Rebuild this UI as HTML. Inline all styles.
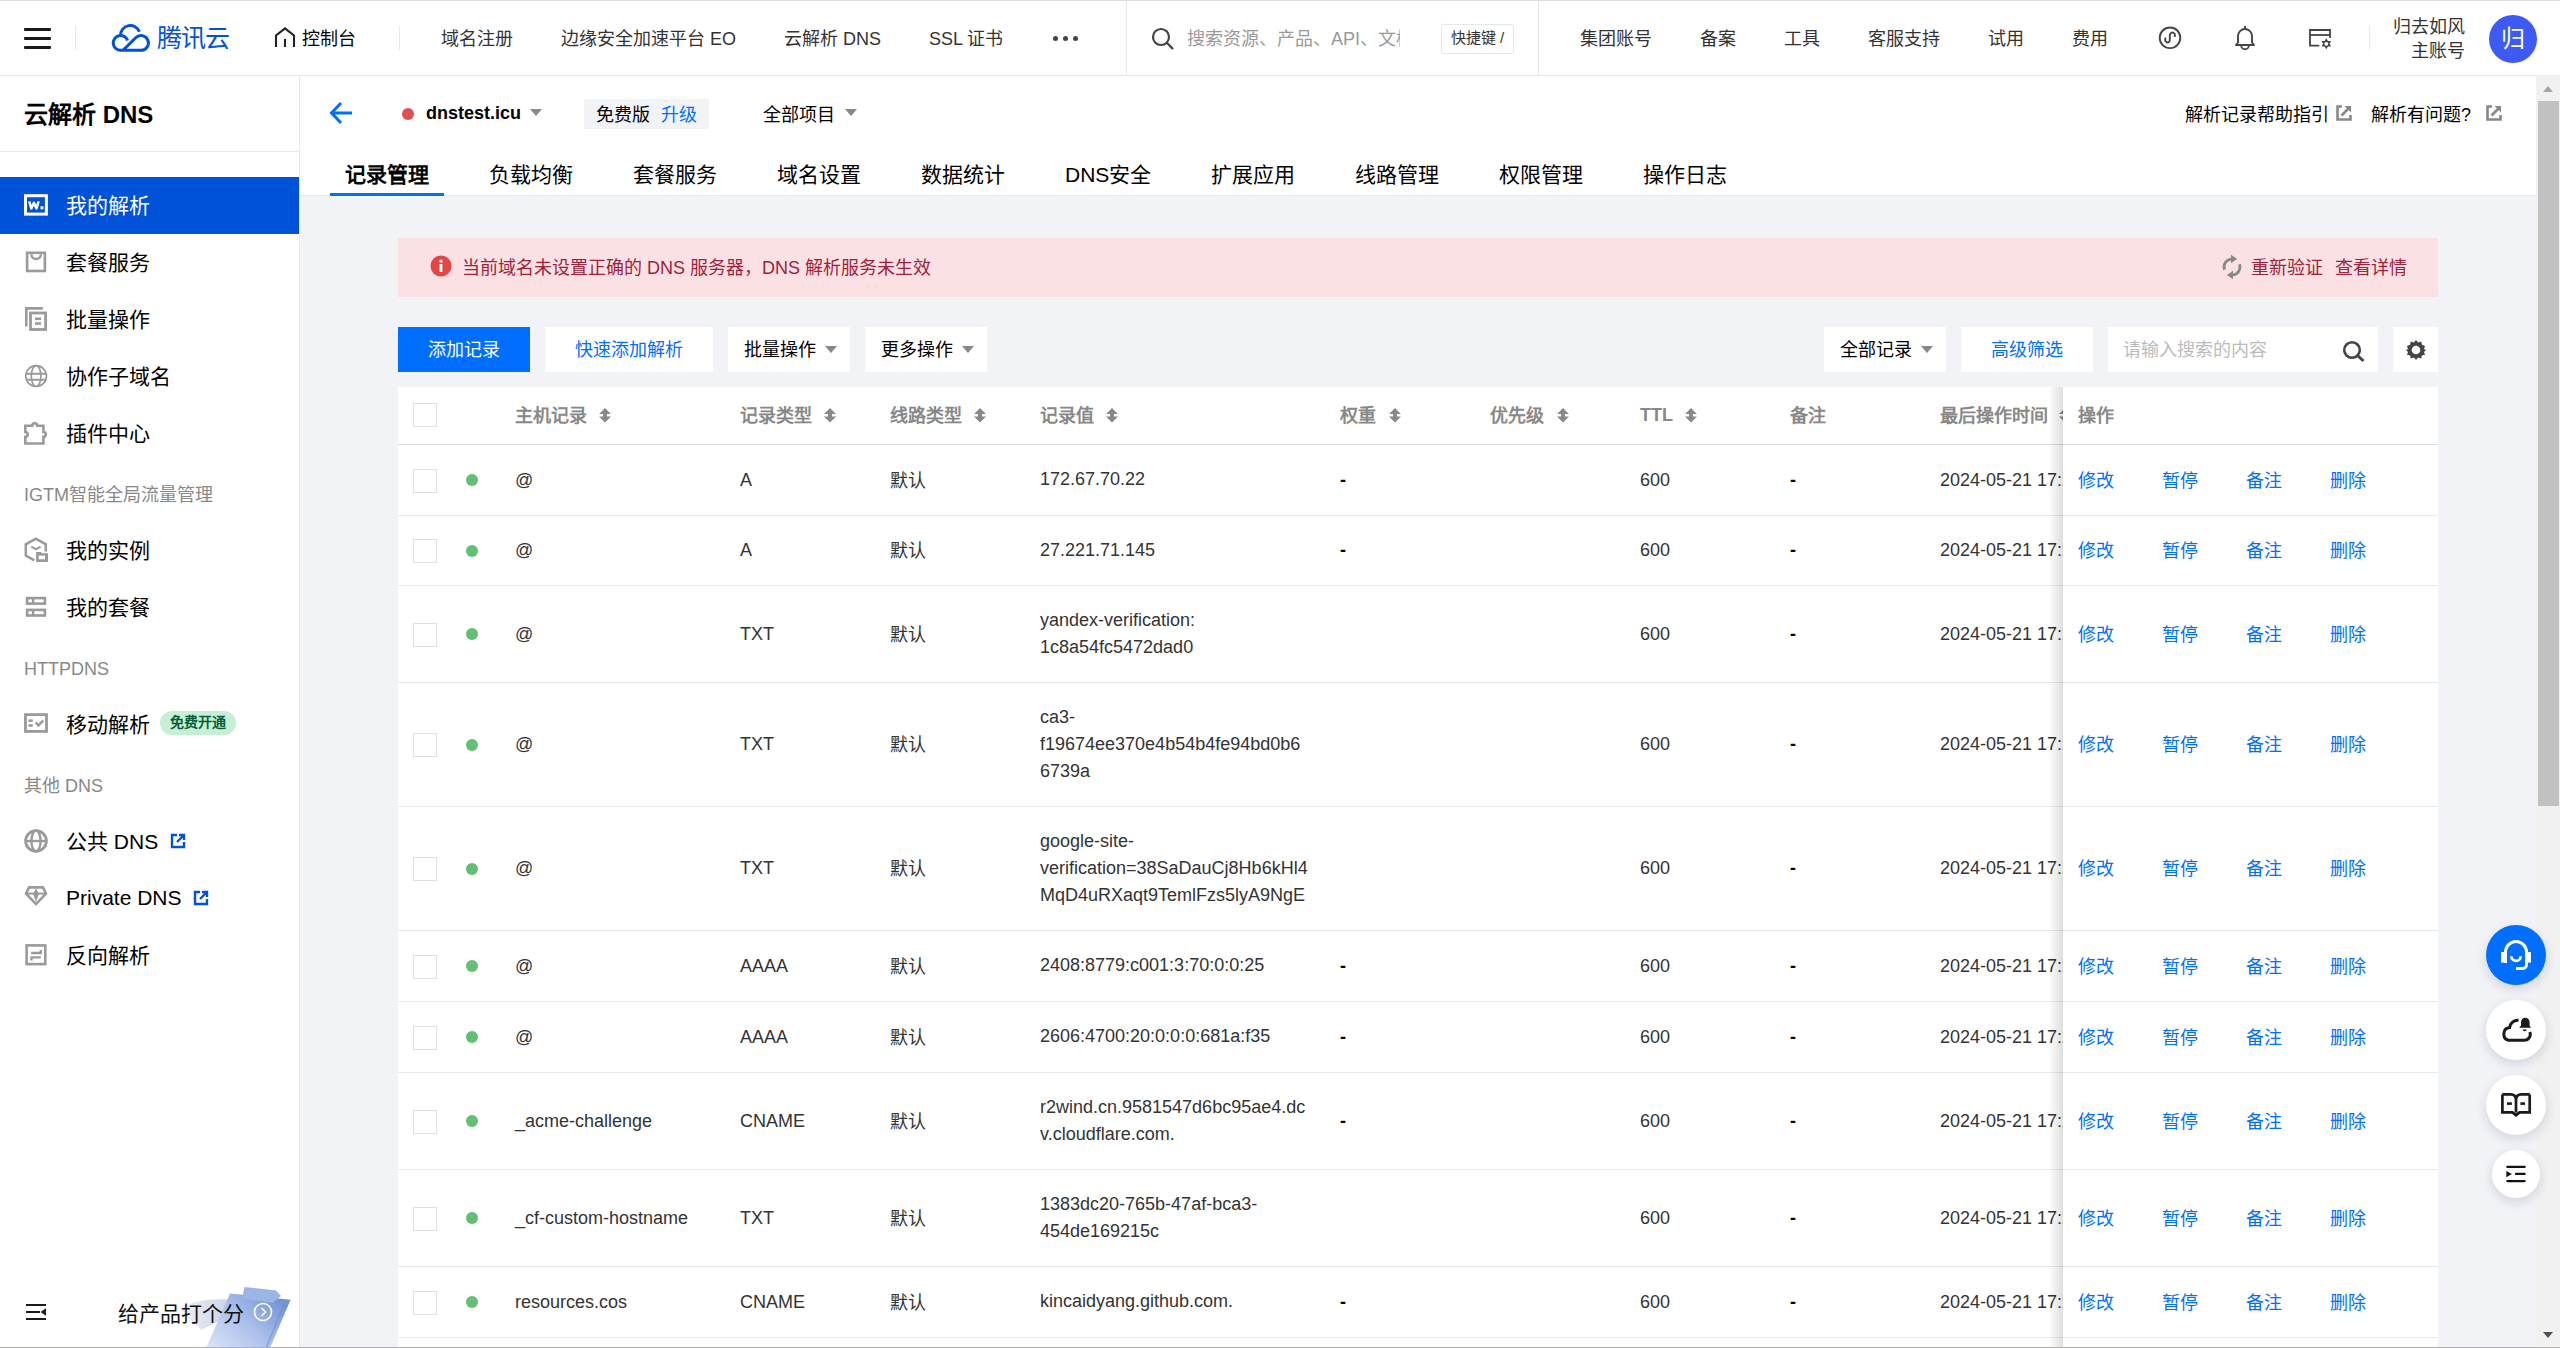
<!DOCTYPE html>
<html lang="zh-CN"><head><meta charset="utf-8">
<style>
*{box-sizing:border-box;margin:0;padding:0}
html,body{width:2560px;height:1348px;overflow:hidden;background:#fff;font-family:"Liberation Sans",sans-serif;color:#000}
.a{position:absolute;white-space:nowrap}
#top{z-index:10;position:absolute;left:0;top:0;width:2560px;height:76px;background:#fff;border-bottom:1px solid #e6e8ee}
#topline{position:absolute;left:0;top:0;width:2560px;height:1px;background:#dcdedd}
.nav{font-size:18px;color:#333;line-height:20px;top:29px}
.vd{position:absolute;width:1px;background:#e5e8ee}
#side{position:absolute;left:0;top:0;width:300px;height:1348px;background:#fff;border-right:1px solid #e5e8ee}
.si{position:absolute;left:0;width:299px;height:57px}
.si .ic{position:absolute;left:24px;top:16px;width:24px;height:24px}
.si .tx{position:absolute;left:66px;top:17px;font-size:21px;line-height:24px;color:#000;white-space:nowrap}
.grp{position:absolute;left:24px;font-size:18px;color:#888;line-height:20px;white-space:nowrap}
#main{position:absolute;left:0;top:0;width:2560px;height:1348px}
body{background:#f2f3f7}
#hdr{position:absolute;left:0;top:0;width:2236px;height:120px;background:#fff;border-bottom:1px solid #e5e8ee}
.tab{position:absolute;top:86px;font-size:21px;line-height:24px;color:#000;white-space:nowrap}
</style></head><body>
<div id="top">
  <div id="topline"></div>
  <div class="a" style="left:24px;top:28px;width:27px;height:3px;background:#1a1a1a;border-radius:1px"></div>
  <div class="a" style="left:24px;top:37px;width:27px;height:3px;background:#1a1a1a;border-radius:1px"></div>
  <div class="a" style="left:24px;top:46px;width:27px;height:3px;background:#1a1a1a;border-radius:1px"></div>
  <div class="vd" style="left:75px;top:26px;height:24px"></div>
  <svg class="a" style="left:100px;top:10px" width="60" height="50" viewBox="100 10 60 50">
    <path d="M120.6 35.5 A9.7 9.7 0 0 1 139.4 31.8" fill="none" stroke="#0052d9" stroke-width="3"/>
    <path d="M127.6 40.4 A7.4 7.4 0 1 0 120.6 50.3 L140.9 50.3 A7.4 7.4 0 1 0 135.7 37.7 L123 50.3" fill="none" stroke="#0052d9" stroke-width="3" stroke-linejoin="round"/>
  </svg>
  <div class="a" style="left:157px;top:23px;font-size:25px;line-height:30px;color:#0052d9;letter-spacing:-1px">腾讯云</div>
  <svg class="a" style="left:274px;top:26px" width="22" height="22" viewBox="0 0 22 22">
    <path d="M2 21 V9.5 L11 2.4 L20 9.5 V21 M11 13 V21" fill="none" stroke="#222" stroke-width="2.1"/>
  </svg>
  <div class="a nav" style="left:302px;color:#000">控制台</div>
  <div class="vd" style="left:399px;top:26px;height:24px"></div>
  <div class="a nav" style="left:441px">域名注册</div>
  <div class="a nav" style="left:561px">边缘安全加速平台 EO</div>
  <div class="a nav" style="left:784px">云解析 DNS</div>
  <div class="a nav" style="left:929px">SSL 证书</div>
  <div class="a" style="left:1053px;top:36px;width:5px;height:5px;border-radius:50%;background:#444"></div>
  <div class="a" style="left:1063px;top:36px;width:5px;height:5px;border-radius:50%;background:#444"></div>
  <div class="a" style="left:1073px;top:36px;width:5px;height:5px;border-radius:50%;background:#444"></div>
  <div class="vd" style="left:1126px;top:0;height:75px"></div>
  <svg class="a" style="left:1151px;top:27px" width="24" height="23" viewBox="0 0 24 23">
    <circle cx="10" cy="10" r="8" fill="none" stroke="#444" stroke-width="2.2"/>
    <path d="M16 16 L22 22" stroke="#444" stroke-width="2.4"/>
  </svg>
  <div class="a nav" style="left:1187px;color:#999;width:213px;overflow:hidden">搜索资源、产品、API、文档</div>
  <div class="a" style="left:1441px;top:24px;width:73px;height:30px;border:1px solid #e3e6eb;border-radius:3px;font-size:15px;line-height:25px;color:#333;text-align:center">快捷键 /</div>
  <div class="vd" style="left:1538px;top:0;height:75px"></div>
  <div class="a nav" style="left:1580px">集团账号</div>
  <div class="a nav" style="left:1700px">备案</div>
  <div class="a nav" style="left:1784px">工具</div>
  <div class="a nav" style="left:1868px">客服支持</div>
  <div class="a nav" style="left:1988px">试用</div>
  <div class="a nav" style="left:2072px">费用</div>
  <svg class="a" style="left:2150px;top:20px" width="40" height="36" viewBox="2150 20 40 36">
    <circle cx="2170" cy="37.8" r="10.3" fill="none" stroke="#444" stroke-width="1.9"/>
    <path d="M2165.6 37.6 C2163.8 42.5 2169.8 44.8 2169.8 39.5 V35.8 C2169.8 30.8 2176.6 31.8 2174.6 37" fill="none" stroke="#444" stroke-width="1.9"/>
  </svg>
  <svg class="a" style="left:2230px;top:20px" width="30" height="36" viewBox="2230 20 30 36">
    <path d="M2236 45 L2238 42.5 V36 a7 7 0 0 1 14 0 V42.5 L2254 45 Z" fill="none" stroke="#444" stroke-width="1.9" stroke-linejoin="round"/>
    <path d="M2245 26 V29" stroke="#444" stroke-width="1.9"/>
    <path d="M2241.2 45.5 a3.8 3.8 0 0 0 7.6 0" fill="none" stroke="#444" stroke-width="1.9"/>
  </svg>
  <svg class="a" style="left:2300px;top:20px" width="40" height="36" viewBox="2300 20 40 36">
    <path d="M2319.3 45.6 H2310 V30 H2330 V38" fill="none" stroke="#444" stroke-width="1.8"/>
    <path d="M2310 35 H2330" stroke="#444" stroke-width="1.8"/>
    <path d="M2326.3 38.3 L2331.1 46.6 H2321.5 Z M2326.3 49.3 L2321.5 41 H2331.1 Z" fill="#444"/>
    <circle cx="2326.3" cy="43.8" r="1.9" fill="#fff"/>
  </svg>
  <div class="vd" style="left:2369px;top:26px;height:24px"></div>
  <div class="a" style="right:95px;top:15px;font-size:18px;line-height:24px;color:#333;text-align:right">归去如风<br>主账号</div>
  <div class="a" style="left:2489px;top:15px;width:48px;height:48px;border-radius:50%;background:#3d5af5;color:#fff;font-size:24px;line-height:48px;text-align:center">归</div>
</div>
<div id="side">
  <div class="a" style="left:24px;top:100px;font-size:24px;line-height:30px;font-weight:bold;color:#000">云解析 DNS</div>
  <div class="a" style="left:0;top:151px;width:299px;height:1px;background:#e5e8ee"></div>
  <div class="a" style="left:0;top:177px;width:299px;height:57px;background:#0052d9"></div>
  <svg class="a" style="left:20px;top:190px" width="32" height="30" viewBox="20 190 32 30"><rect x="25.5" y="195.7" width="20.9" height="18.4" fill="none" stroke="#fff" stroke-width="3"/><path d="M29.2 201.4 L31.3 208.4 L33.9 202.8 L36.5 208.4 L38.6 201.4" fill="none" stroke="#fff" stroke-width="2.5" stroke-linejoin="round"/><rect x="40.5" y="206.3" width="3" height="3" fill="#fff"/></svg>
  <div class="a" style="left:66px;top:193px;font-size:21px;line-height:26px;color:#fff">我的解析</div>
  <svg class="a" style="left:20px;top:246px" width="32" height="32" viewBox="20 246 32 32"><rect x="27.1" y="252.8" width="17.8" height="18.2" fill="none" stroke="#9a9a9a" stroke-width="2.6"/><path d="M31.4 254.3 A4.75 4.75 0 0 0 40.9 254.3" fill="none" stroke="#9a9a9a" stroke-width="2.4"/></svg>
  <div class="a" style="left:66px;top:250px;font-size:21px;line-height:26px;color:#000">套餐服务</div>
  <svg class="a" style="left:20px;top:303px" width="32" height="32" viewBox="20 303 32 32"><path d="M26.3 326.4 V308.4 H42.8" fill="none" stroke="#9a9a9a" stroke-width="2.6"/><rect x="30.5" y="313" width="15.1" height="16.5" fill="none" stroke="#9a9a9a" stroke-width="2.8"/><rect x="35" y="317.5" width="6.1" height="2.6" fill="#9a9a9a"/><rect x="35" y="322.2" width="6.1" height="2.6" fill="#9a9a9a"/></svg>
  <div class="a" style="left:66px;top:307px;font-size:21px;line-height:26px;color:#000">批量操作</div>
  <svg class="a" style="left:20px;top:360px" width="32" height="32" viewBox="20 360 32 32"><circle cx="36.1" cy="376.1" r="10.4" fill="none" stroke="#9a9a9a" stroke-width="1.7"/><ellipse cx="36.1" cy="376.1" rx="4.85" ry="10.4" fill="none" stroke="#9a9a9a" stroke-width="1.7"/><path d="M26 373.8 H46.2 M26 379.7 H46.2" stroke="#9a9a9a" stroke-width="2"/></svg>
  <div class="a" style="left:66px;top:364px;font-size:21px;line-height:26px;color:#000">协作子域名</div>
  <svg class="a" style="left:20px;top:417px" width="32" height="32" viewBox="20 417 32 32"><path d="M25.3 425.7 H32.2 A2.5 2.5 0 0 1 37.2 425.7 H43.4 V432 A2.4 2.4 0 0 1 43.4 436.8 V443.5 H25.3 V436.8 A2.4 2.4 0 0 0 25.3 432 Z" fill="none" stroke="#9a9a9a" stroke-width="2.6"/></svg>
  <div class="a" style="left:66px;top:421px;font-size:21px;line-height:26px;color:#000">插件中心</div>
  <svg class="a" style="left:20px;top:534px" width="32" height="32" viewBox="20 534 32 32"><path d="M45.8 551.5 V544.3 L35.8 538.6 L25.8 544.3 V555.6 L34.3 560.3" fill="none" stroke="#9a9a9a" stroke-width="2.5"/><path d="M31.3 546.7 L35.8 549.3 L40.6 546.7" fill="none" stroke="#9a9a9a" stroke-width="2"/><path d="M36.1 551.9 H41 L42 553.3 H48 V561.9 H36.1 Z" fill="#9a9a9a"/><rect x="38.7" y="555.6" width="6.3" height="3.7" fill="#fff"/></svg>
  <div class="a" style="left:66px;top:538px;font-size:21px;line-height:26px;color:#000">我的实例</div>
  <svg class="a" style="left:20px;top:591px" width="32" height="32" viewBox="20 591 32 32"><rect x="25.8" y="596.8" width="20.4" height="8.1" fill="#9a9a9a"/><rect x="28.4" y="599.4" width="3.5" height="2.9" fill="#fff"/><rect x="34.3" y="599.4" width="9.3" height="2.9" fill="#fff"/><rect x="25.8" y="608.6" width="20.4" height="8.2" fill="#9a9a9a"/><rect x="28.4" y="611.2" width="3.5" height="3" fill="#fff"/><rect x="34.3" y="611.2" width="9.3" height="3" fill="#fff"/></svg>
  <div class="a" style="left:66px;top:595px;font-size:21px;line-height:26px;color:#000">我的套餐</div>
  <svg class="a" style="left:20px;top:708px" width="32" height="30" viewBox="20 708 32 30"><rect x="25.45" y="714.6" width="21.05" height="16.8" fill="none" stroke="#9a9a9a" stroke-width="2.8"/><rect x="28.4" y="719.4" width="4.4" height="2.6" fill="#9a9a9a"/><rect x="28.4" y="724.2" width="4.4" height="2.6" fill="#9a9a9a"/><path d="M35.6 722.4 L38.5 725.4 L43.3 720.4" fill="none" stroke="#9a9a9a" stroke-width="2.5"/></svg>
  <div class="a" style="left:66px;top:712px;font-size:21px;line-height:26px;color:#000">移动解析</div>
  <svg class="a" style="left:20px;top:825px" width="32" height="32" viewBox="20 825 32 32"><circle cx="36" cy="841" r="10.4" fill="none" stroke="#9a9a9a" stroke-width="2.8"/><ellipse cx="36" cy="841" rx="4.6" ry="10.4" fill="none" stroke="#9a9a9a" stroke-width="2.4"/><path d="M26 841 H46" stroke="#9a9a9a" stroke-width="2.4"/></svg>
  <div class="a" style="left:66px;top:829px;font-size:21px;line-height:26px;color:#000">公共 DNS</div>
  <svg class="a" style="left:20px;top:882px" width="32" height="28" viewBox="20 882 32 28"><path d="M29 887.4 H43 L46 893.6 L36 904.2 L26 893.6 Z" fill="none" stroke="#9a9a9a" stroke-width="2.6" stroke-linejoin="round"/><path d="M26.5 893.6 H45.5" stroke="#9a9a9a" stroke-width="2"/><path d="M33 893.6 L36 902 L39 893.6 Z" fill="#9a9a9a"/><path d="M36 888.5 L38.6 893 H33.4 Z" fill="#9a9a9a"/></svg>
  <div class="a" style="left:66px;top:885px;font-size:21px;line-height:26px;color:#000">Private DNS</div>
  <svg class="a" style="left:20px;top:939px" width="32" height="32" viewBox="20 939 32 32"><rect x="26.6" y="945.4" width="18.7" height="18.7" fill="none" stroke="#9a9a9a" stroke-width="2.6"/><path d="M31.1 953 H40.8 V950" fill="none" stroke="#9a9a9a" stroke-width="2.3"/><path d="M40.8 957.4 H31.5 V960.4" fill="none" stroke="#9a9a9a" stroke-width="2.3"/></svg>
  <div class="a" style="left:66px;top:943px;font-size:21px;line-height:26px;color:#000">反向解析</div>
  <div class="a" style="left:24px;top:484px;font-size:18px;line-height:22px;color:#888">IGTM智能全局流量管理</div>
  <div class="a" style="left:24px;top:658px;font-size:18px;line-height:22px;color:#888">HTTPDNS</div>
  <div class="a" style="left:24px;top:775px;font-size:18px;line-height:22px;color:#888">其他 DNS</div>
  <div class="a" style="left:160px;top:711px;width:76px;height:24px;border-radius:12px;background:#c6efd6;color:#075e3a;font-size:14px;line-height:23px;text-align:center;font-weight:bold">免费开通</div>
  <svg class="a" style="left:170px;top:833px" width="16" height="16" viewBox="0 0 16 16"><path d="M7 2 H2 V14 H14 V9" fill="none" stroke="#0052d9" stroke-width="2.4"/><path d="M7 9 L14 2 M9 2 H14 V7" fill="none" stroke="#0052d9" stroke-width="2.4"/></svg>
  <svg class="a" style="left:193px;top:890px" width="16" height="16" viewBox="0 0 16 16"><path d="M7 2 H2 V14 H14 V9" fill="none" stroke="#0052d9" stroke-width="2.4"/><path d="M7 9 L14 2 M9 2 H14 V7" fill="none" stroke="#0052d9" stroke-width="2.4"/></svg>
  <svg class="a" style="left:20px;top:1295px" width="32" height="32" viewBox="20 1295 32 32"><path d="M26 1305 H46 M26 1312 H40 M26 1319 H46" stroke="#1a1a1a" stroke-width="2.2"/><path d="M46 1308.3 L40.5 1312 L46 1315.8 Z" fill="#1a1a1a"/></svg>
  <svg class="a" style="left:170px;top:1280px" width="130" height="68" viewBox="170 1280 130 68"><defs><linearGradient id="lg" x1="0" y1="1" x2="1" y2="0.3"><stop offset="0" stop-color="#dbe5fa"/><stop offset="0.55" stop-color="#a9bfea"/><stop offset="1" stop-color="#7393d6"/></linearGradient><linearGradient id="lg2" x1="0" y1="0" x2="1" y2="0"><stop offset="0" stop-color="#eef1f6"/><stop offset="1" stop-color="#c9d3e3"/></linearGradient></defs>
    <path d="M180 1310 C190 1300 215 1298 232 1300 L226 1318 L201 1330 C196 1322 186 1318 180 1310 Z" fill="url(#lg2)"/>
    <path d="M230 1293.5 L290.6 1299.7 L270 1348 L206 1348 Z" fill="url(#lg)"/>
    <path d="M285 1302 L266 1348" stroke="#6f8fcf" stroke-width="1.5" opacity="0.6"/>
    <path d="M244.6 1287 L276 1290.6 L281 1296 L272.5 1302.7 L242 1298.5 Z" fill="#9db5e6"/>
  </svg>
  <div class="a" style="left:118px;top:1301px;font-size:21px;line-height:26px;color:#111">给产品打个分</div>
  <svg class="a" style="left:253px;top:1302px" width="20" height="20" viewBox="0 0 20 20"><circle cx="10" cy="10" r="8.5" fill="none" stroke="#fff" stroke-width="1.6"/><path d="M8.5 6 L12.5 10 L8.5 14" fill="none" stroke="#fff" stroke-width="1.6"/></svg>
</div>
<div id="main">
  <div class="a" style="left:300px;top:76px;width:2236px;height:120px;background:#fff;border-bottom:1px solid #e5e8ee"></div>
  <div class="a" style="left:2536px;top:76px;width:24px;height:1272px;background:#f1f1f1"></div>
  <div class="a" style="left:2538px;top:101px;width:21px;height:705px;background:#c1c1c1"></div>
  <div class="a" style="left:2543px;top:86px;width:0;height:0;border-left:5.5px solid transparent;border-right:5.5px solid transparent;border-bottom:6px solid #a3a3a3"></div>
  <div class="a" style="left:2543px;top:1332px;width:0;height:0;border-left:5.5px solid transparent;border-right:5.5px solid transparent;border-top:6px solid #505050"></div>
  <div class="a" style="left:0;top:1347px;width:2560px;height:1px;background:#b4acac;z-index:20"></div>
  <svg class="a" style="left:329px;top:101px" width="25" height="24" viewBox="0 0 25 24"><path d="M12 2 L2.5 12 L12 22 M2.5 12 H23" fill="none" stroke="#006eff" stroke-width="3"/></svg>
  <div class="a" style="left:402px;top:108px;width:12px;height:12px;border-radius:50%;background:#e05050"></div>
  <div class="a" style="left:426px;top:103px;font-size:18px;line-height:20px;font-weight:bold;color:#000">dnstest.icu</div>
  <div class="a" style="left:530px;top:109px;border-left:6px solid transparent;border-right:6px solid transparent;border-top:7px solid #888"></div>
  <div class="a" style="left:584px;top:99px;width:125px;height:30px;background:#f2f3f7"></div>
  <div class="a" style="left:596px;top:105px;font-size:18px;line-height:20px;color:#000">免费版</div>
  <div class="a" style="left:661px;top:105px;font-size:18px;line-height:20px;color:#006eff">升级</div>
  <div class="a" style="left:763px;top:105px;font-size:18px;line-height:20px;color:#000">全部项目</div>
  <div class="a" style="left:845px;top:109px;border-left:6px solid transparent;border-right:6px solid transparent;border-top:7px solid #888"></div>
  <div class="a" style="left:2185px;top:105px;font-size:18px;line-height:20px;color:#000">解析记录帮助指引</div>
  <div class="a" style="left:2371px;top:105px;font-size:18px;line-height:20px;color:#000">解析有问题?</div>
  <svg class="a" style="left:2336px;top:105px" width="16" height="16" viewBox="0 0 16 16"><path d="M6 1.5 H1.5 V14.5 H14.5 V10" fill="none" stroke="#888" stroke-width="2.6"/><path d="M5.5 10.5 L13 3" stroke="#888" stroke-width="2.6"/><path d="M8.5 1 H15 V7.5 Z" fill="#888"/></svg>
  <svg class="a" style="left:2486px;top:105px" width="16" height="16" viewBox="0 0 16 16"><path d="M6 1.5 H1.5 V14.5 H14.5 V10" fill="none" stroke="#888" stroke-width="2.6"/><path d="M5.5 10.5 L13 3" stroke="#888" stroke-width="2.6"/><path d="M8.5 1 H15 V7.5 Z" fill="#888"/></svg>
  <div class="a" style="left:345px;top:163px;font-size:21px;line-height:24px;font-weight:bold;color:#000">记录管理</div>
  <div class="a" style="left:489px;top:163px;font-size:21px;line-height:24px;color:#000">负载均衡</div>
  <div class="a" style="left:633px;top:163px;font-size:21px;line-height:24px;color:#000">套餐服务</div>
  <div class="a" style="left:777px;top:163px;font-size:21px;line-height:24px;color:#000">域名设置</div>
  <div class="a" style="left:921px;top:163px;font-size:21px;line-height:24px;color:#000">数据统计</div>
  <div class="a" style="left:1065px;top:163px;font-size:21px;line-height:24px;color:#000">DNS安全</div>
  <div class="a" style="left:1211px;top:163px;font-size:21px;line-height:24px;color:#000">扩展应用</div>
  <div class="a" style="left:1355px;top:163px;font-size:21px;line-height:24px;color:#000">线路管理</div>
  <div class="a" style="left:1499px;top:163px;font-size:21px;line-height:24px;color:#000">权限管理</div>
  <div class="a" style="left:1643px;top:163px;font-size:21px;line-height:24px;color:#000">操作日志</div>
  <div class="a" style="left:330px;top:193px;width:114px;height:3px;background:#006eff"></div>
  <div class="a" style="left:398px;top:238px;width:2040px;height:59px;background:#fbe1e3"></div>
  <svg class="a" style="left:430px;top:255px" width="22" height="22" viewBox="0 0 22 22"><circle cx="11" cy="11" r="10.5" fill="#e54545"/><rect x="9.6" y="9" width="2.8" height="8" fill="#fff"/><rect x="9.6" y="4.8" width="2.8" height="2.8" fill="#fff"/></svg>
  <div class="a" style="left:462px;top:258px;font-size:18px;line-height:20px;color:#a0213c">当前域名未设置正确的 DNS 服务器，DNS 解析服务未生效</div>
  <svg class="a" style="left:2215px;top:250px" width="32" height="34" viewBox="2215 250 32 34"><path d="M2224.5 269.7 A8 8 0 0 1 2231 259.1" fill="none" stroke="#888" stroke-width="2.8"/><path d="M2237.2 259 L2231 254.8 V263.2 Z" fill="#888"/><path d="M2239.5 264.3 A8 8 0 0 1 2233 274.9" fill="none" stroke="#888" stroke-width="2.8"/><path d="M2226.8 275 L2233 270.8 V279.2 Z" fill="#888"/></svg>
  <div class="a" style="left:2251px;top:258px;font-size:18px;line-height:20px;color:#a0213c">重新验证</div>
  <div class="a" style="left:2335px;top:258px;font-size:18px;line-height:20px;color:#a0213c">查看详情</div>
  <div class="a" style="left:398px;top:327px;width:132px;height:45px;background:#006eff"></div>
  <div class="a" style="left:428px;top:340px;font-size:18px;line-height:20px;color:#fff">添加记录</div>
  <div class="a" style="left:545px;top:327px;width:168px;height:45px;background:#fff"></div>
  <div class="a" style="left:575px;top:340px;font-size:18px;line-height:20px;color:#006eff">快速添加解析</div>
  <div class="a" style="left:728px;top:327px;width:122px;height:45px;background:#fff"></div>
  <div class="a" style="left:744px;top:340px;font-size:18px;line-height:20px;color:#000">批量操作</div>
  <div class="a" style="left:825px;top:346px;border-left:6px solid transparent;border-right:6px solid transparent;border-top:7px solid #888"></div>
  <div class="a" style="left:865px;top:327px;width:122px;height:45px;background:#fff"></div>
  <div class="a" style="left:881px;top:340px;font-size:18px;line-height:20px;color:#000">更多操作</div>
  <div class="a" style="left:962px;top:346px;border-left:6px solid transparent;border-right:6px solid transparent;border-top:7px solid #888"></div>
  <div class="a" style="left:1824px;top:327px;width:122px;height:45px;background:#fff"></div>
  <div class="a" style="left:1840px;top:340px;font-size:18px;line-height:20px;color:#000">全部记录</div>
  <div class="a" style="left:1921px;top:346px;border-left:6px solid transparent;border-right:6px solid transparent;border-top:7px solid #888"></div>
  <div class="a" style="left:1961px;top:327px;width:132px;height:45px;background:#fff"></div>
  <div class="a" style="left:1991px;top:340px;font-size:18px;line-height:20px;color:#006eff">高级筛选</div>
  <div class="a" style="left:2108px;top:327px;width:270px;height:45px;background:#fff"></div>
  <div class="a" style="left:2123px;top:340px;font-size:18px;line-height:20px;color:#bbb">请输入搜索的内容</div>
  <svg class="a" style="left:2342px;top:340px" width="24" height="23" viewBox="0 0 24 23"><circle cx="10" cy="10" r="7.8" fill="none" stroke="#444" stroke-width="2.6"/><path d="M15.5 15.5 L21.5 21" stroke="#444" stroke-width="3"/></svg>
  <div class="a" style="left:2393px;top:327px;width:45px;height:45px;background:#fff"></div>
  <svg class="a" style="left:2405px;top:339px" width="22" height="22" viewBox="0 0 22 22"><path d="M11 1 L13 3.5 L16.2 2.6 L16.9 5.8 L20 6.9 L19 10 L21 11 L19 13 L20 16 L16.9 16.2 L16.2 19.4 L13 18.5 L11 21 L9 18.5 L5.8 19.4 L5.1 16.2 L2 16 L3 13 L1 11 L3 10 L2 6.9 L5.1 5.8 L5.8 2.6 L9 3.5 Z" fill="#444"/><circle cx="11" cy="11" r="4.3" fill="#fff"/></svg>
  <!--TABLE-->
  <div class="a" style="left:398px;top:387px;width:2040px;height:961px;background:#fff"></div>
  <div class="a" style="left:398px;top:444px;width:2040px;height:1px;background:#d5dae3"></div>
  <div class="a" style="left:398px;top:515px;width:2040px;height:1px;background:#e6e9ef"></div>
  <div class="a" style="left:398px;top:585px;width:2040px;height:1px;background:#e6e9ef"></div>
  <div class="a" style="left:398px;top:682px;width:2040px;height:1px;background:#e6e9ef"></div>
  <div class="a" style="left:398px;top:806px;width:2040px;height:1px;background:#e6e9ef"></div>
  <div class="a" style="left:398px;top:930px;width:2040px;height:1px;background:#e6e9ef"></div>
  <div class="a" style="left:398px;top:1001px;width:2040px;height:1px;background:#e6e9ef"></div>
  <div class="a" style="left:398px;top:1072px;width:2040px;height:1px;background:#e6e9ef"></div>
  <div class="a" style="left:398px;top:1169px;width:2040px;height:1px;background:#e6e9ef"></div>
  <div class="a" style="left:398px;top:1266px;width:2040px;height:1px;background:#e6e9ef"></div>
  <div class="a" style="left:398px;top:1337px;width:2040px;height:1px;background:#e6e9ef"></div>
  <div class="a" style="left:413px;top:403px;width:24px;height:24px;border:1px solid #dcdfe6;background:#fff"></div>
  <div class="a" style="left:515px;top:406px;font-size:18px;line-height:20px;color:#888;font-weight:bold">主机记录</div>
  <svg class="a" style="left:599px;top:408px" width="12" height="15" viewBox="0 0 12 15"><path d="M6 0 L12 6 H8 V8.5 H12 L6 14.5 L0 8.5 H4 V6 H0 Z" fill="#888"/></svg>
  <div class="a" style="left:740px;top:406px;font-size:18px;line-height:20px;color:#888;font-weight:bold">记录类型</div>
  <svg class="a" style="left:824px;top:408px" width="12" height="15" viewBox="0 0 12 15"><path d="M6 0 L12 6 H8 V8.5 H12 L6 14.5 L0 8.5 H4 V6 H0 Z" fill="#888"/></svg>
  <div class="a" style="left:890px;top:406px;font-size:18px;line-height:20px;color:#888;font-weight:bold">线路类型</div>
  <svg class="a" style="left:974px;top:408px" width="12" height="15" viewBox="0 0 12 15"><path d="M6 0 L12 6 H8 V8.5 H12 L6 14.5 L0 8.5 H4 V6 H0 Z" fill="#888"/></svg>
  <div class="a" style="left:1040px;top:406px;font-size:18px;line-height:20px;color:#888;font-weight:bold">记录值</div>
  <svg class="a" style="left:1106px;top:408px" width="12" height="15" viewBox="0 0 12 15"><path d="M6 0 L12 6 H8 V8.5 H12 L6 14.5 L0 8.5 H4 V6 H0 Z" fill="#888"/></svg>
  <div class="a" style="left:1340px;top:406px;font-size:18px;line-height:20px;color:#888;font-weight:bold">权重</div>
  <svg class="a" style="left:1389px;top:408px" width="12" height="15" viewBox="0 0 12 15"><path d="M6 0 L12 6 H8 V8.5 H12 L6 14.5 L0 8.5 H4 V6 H0 Z" fill="#888"/></svg>
  <div class="a" style="left:1490px;top:406px;font-size:18px;line-height:20px;color:#888;font-weight:bold">优先级</div>
  <svg class="a" style="left:1557px;top:408px" width="12" height="15" viewBox="0 0 12 15"><path d="M6 0 L12 6 H8 V8.5 H12 L6 14.5 L0 8.5 H4 V6 H0 Z" fill="#888"/></svg>
  <div class="a" style="left:1640px;top:405px;font-size:18px;line-height:20px;color:#888;font-weight:bold">TTL</div>
  <svg class="a" style="left:1685px;top:408px" width="12" height="15" viewBox="0 0 12 15"><path d="M6 0 L12 6 H8 V8.5 H12 L6 14.5 L0 8.5 H4 V6 H0 Z" fill="#888"/></svg>
  <div class="a" style="left:1790px;top:406px;font-size:18px;line-height:20px;color:#888;font-weight:bold">备注</div>
  <div class="a" style="left:1940px;top:406px;font-size:18px;line-height:20px;color:#888;font-weight:bold">最后操作时间</div>
  <svg class="a" style="left:2059px;top:408px" width="12" height="15" viewBox="0 0 12 15"><path d="M6 0 L12 6 H8 V8.5 H12 L6 14.5 L0 8.5 H4 V6 H0 Z" fill="#888"/></svg>
  <div class="a" style="left:413px;top:469px;width:24px;height:24px;border:1px solid #dcdfe6;background:#fff"></div>
  <div class="a" style="left:466px;top:474px;width:12px;height:12px;border-radius:50%;background:#62bf73"></div>
  <div class="a" style="left:515px;top:470px;font-size:18px;line-height:20px;color:#333">@</div>
  <div class="a" style="left:740px;top:470px;font-size:18px;line-height:20px;color:#333">A</div>
  <div class="a" style="left:890px;top:471px;font-size:18px;line-height:20px;color:#333">默认</div>
  <div class="a" style="left:1040px;top:466px;font-size:18px;line-height:27px;color:#333">172.67.70.22</div>
  <div class="a" style="left:1340px;top:470px;font-size:18px;line-height:20px;color:#000;font-weight:bold">-</div>
  <div class="a" style="left:1640px;top:470px;font-size:18px;line-height:20px;color:#333">600</div>
  <div class="a" style="left:1790px;top:470px;font-size:18px;line-height:20px;color:#000;font-weight:bold">-</div>
  <div class="a" style="left:1940px;top:470px;font-size:18px;line-height:20px;color:#333">2024-05-21 17:29:05</div>
  <div class="a" style="left:413px;top:539px;width:24px;height:24px;border:1px solid #dcdfe6;background:#fff"></div>
  <div class="a" style="left:466px;top:545px;width:12px;height:12px;border-radius:50%;background:#62bf73"></div>
  <div class="a" style="left:515px;top:540px;font-size:18px;line-height:20px;color:#333">@</div>
  <div class="a" style="left:740px;top:540px;font-size:18px;line-height:20px;color:#333">A</div>
  <div class="a" style="left:890px;top:541px;font-size:18px;line-height:20px;color:#333">默认</div>
  <div class="a" style="left:1040px;top:537px;font-size:18px;line-height:27px;color:#333">27.221.71.145</div>
  <div class="a" style="left:1340px;top:540px;font-size:18px;line-height:20px;color:#000;font-weight:bold">-</div>
  <div class="a" style="left:1640px;top:540px;font-size:18px;line-height:20px;color:#333">600</div>
  <div class="a" style="left:1790px;top:540px;font-size:18px;line-height:20px;color:#000;font-weight:bold">-</div>
  <div class="a" style="left:1940px;top:540px;font-size:18px;line-height:20px;color:#333">2024-05-21 17:29:05</div>
  <div class="a" style="left:413px;top:623px;width:24px;height:24px;border:1px solid #dcdfe6;background:#fff"></div>
  <div class="a" style="left:466px;top:628px;width:12px;height:12px;border-radius:50%;background:#62bf73"></div>
  <div class="a" style="left:515px;top:624px;font-size:18px;line-height:20px;color:#333">@</div>
  <div class="a" style="left:740px;top:624px;font-size:18px;line-height:20px;color:#333">TXT</div>
  <div class="a" style="left:890px;top:625px;font-size:18px;line-height:20px;color:#333">默认</div>
  <div class="a" style="left:1040px;top:607px;font-size:18px;line-height:27px;color:#333">yandex-verification:<br>1c8a54fc5472dad0</div>
  <div class="a" style="left:1640px;top:624px;font-size:18px;line-height:20px;color:#333">600</div>
  <div class="a" style="left:1790px;top:624px;font-size:18px;line-height:20px;color:#000;font-weight:bold">-</div>
  <div class="a" style="left:1940px;top:624px;font-size:18px;line-height:20px;color:#333">2024-05-21 17:29:05</div>
  <div class="a" style="left:413px;top:733px;width:24px;height:24px;border:1px solid #dcdfe6;background:#fff"></div>
  <div class="a" style="left:466px;top:739px;width:12px;height:12px;border-radius:50%;background:#62bf73"></div>
  <div class="a" style="left:515px;top:734px;font-size:18px;line-height:20px;color:#333">@</div>
  <div class="a" style="left:740px;top:734px;font-size:18px;line-height:20px;color:#333">TXT</div>
  <div class="a" style="left:890px;top:735px;font-size:18px;line-height:20px;color:#333">默认</div>
  <div class="a" style="left:1040px;top:704px;font-size:18px;line-height:27px;color:#333">ca3-<br>f19674ee370e4b54b4fe94bd0b6<br>6739a</div>
  <div class="a" style="left:1640px;top:734px;font-size:18px;line-height:20px;color:#333">600</div>
  <div class="a" style="left:1790px;top:734px;font-size:18px;line-height:20px;color:#000;font-weight:bold">-</div>
  <div class="a" style="left:1940px;top:734px;font-size:18px;line-height:20px;color:#333">2024-05-21 17:29:05</div>
  <div class="a" style="left:413px;top:857px;width:24px;height:24px;border:1px solid #dcdfe6;background:#fff"></div>
  <div class="a" style="left:466px;top:863px;width:12px;height:12px;border-radius:50%;background:#62bf73"></div>
  <div class="a" style="left:515px;top:858px;font-size:18px;line-height:20px;color:#333">@</div>
  <div class="a" style="left:740px;top:858px;font-size:18px;line-height:20px;color:#333">TXT</div>
  <div class="a" style="left:890px;top:859px;font-size:18px;line-height:20px;color:#333">默认</div>
  <div class="a" style="left:1040px;top:828px;font-size:18px;line-height:27px;color:#333">google-site-<br>verification=38SaDauCj8Hb6kHl4<br>MqD4uRXaqt9TemlFzs5lyA9NgE</div>
  <div class="a" style="left:1640px;top:858px;font-size:18px;line-height:20px;color:#333">600</div>
  <div class="a" style="left:1790px;top:858px;font-size:18px;line-height:20px;color:#000;font-weight:bold">-</div>
  <div class="a" style="left:1940px;top:858px;font-size:18px;line-height:20px;color:#333">2024-05-21 17:29:05</div>
  <div class="a" style="left:413px;top:955px;width:24px;height:24px;border:1px solid #dcdfe6;background:#fff"></div>
  <div class="a" style="left:466px;top:960px;width:12px;height:12px;border-radius:50%;background:#62bf73"></div>
  <div class="a" style="left:515px;top:956px;font-size:18px;line-height:20px;color:#333">@</div>
  <div class="a" style="left:740px;top:956px;font-size:18px;line-height:20px;color:#333">AAAA</div>
  <div class="a" style="left:890px;top:957px;font-size:18px;line-height:20px;color:#333">默认</div>
  <div class="a" style="left:1040px;top:952px;font-size:18px;line-height:27px;color:#333">2408:8779:c001:3:70:0:0:25</div>
  <div class="a" style="left:1340px;top:956px;font-size:18px;line-height:20px;color:#000;font-weight:bold">-</div>
  <div class="a" style="left:1640px;top:956px;font-size:18px;line-height:20px;color:#333">600</div>
  <div class="a" style="left:1790px;top:956px;font-size:18px;line-height:20px;color:#000;font-weight:bold">-</div>
  <div class="a" style="left:1940px;top:956px;font-size:18px;line-height:20px;color:#333">2024-05-21 17:29:05</div>
  <div class="a" style="left:413px;top:1026px;width:24px;height:24px;border:1px solid #dcdfe6;background:#fff"></div>
  <div class="a" style="left:466px;top:1031px;width:12px;height:12px;border-radius:50%;background:#62bf73"></div>
  <div class="a" style="left:515px;top:1027px;font-size:18px;line-height:20px;color:#333">@</div>
  <div class="a" style="left:740px;top:1027px;font-size:18px;line-height:20px;color:#333">AAAA</div>
  <div class="a" style="left:890px;top:1028px;font-size:18px;line-height:20px;color:#333">默认</div>
  <div class="a" style="left:1040px;top:1023px;font-size:18px;line-height:27px;color:#333">2606:4700:20:0:0:0:681a:f35</div>
  <div class="a" style="left:1340px;top:1027px;font-size:18px;line-height:20px;color:#000;font-weight:bold">-</div>
  <div class="a" style="left:1640px;top:1027px;font-size:18px;line-height:20px;color:#333">600</div>
  <div class="a" style="left:1790px;top:1027px;font-size:18px;line-height:20px;color:#000;font-weight:bold">-</div>
  <div class="a" style="left:1940px;top:1027px;font-size:18px;line-height:20px;color:#333">2024-05-21 17:29:05</div>
  <div class="a" style="left:413px;top:1110px;width:24px;height:24px;border:1px solid #dcdfe6;background:#fff"></div>
  <div class="a" style="left:466px;top:1115px;width:12px;height:12px;border-radius:50%;background:#62bf73"></div>
  <div class="a" style="left:515px;top:1111px;font-size:18px;line-height:20px;color:#333">_acme-challenge</div>
  <div class="a" style="left:740px;top:1111px;font-size:18px;line-height:20px;color:#333">CNAME</div>
  <div class="a" style="left:890px;top:1112px;font-size:18px;line-height:20px;color:#333">默认</div>
  <div class="a" style="left:1040px;top:1094px;font-size:18px;line-height:27px;color:#333">r2wind.cn.9581547d6bc95ae4.dc<br>v.cloudflare.com.</div>
  <div class="a" style="left:1340px;top:1111px;font-size:18px;line-height:20px;color:#000;font-weight:bold">-</div>
  <div class="a" style="left:1640px;top:1111px;font-size:18px;line-height:20px;color:#333">600</div>
  <div class="a" style="left:1790px;top:1111px;font-size:18px;line-height:20px;color:#000;font-weight:bold">-</div>
  <div class="a" style="left:1940px;top:1111px;font-size:18px;line-height:20px;color:#333">2024-05-21 17:29:05</div>
  <div class="a" style="left:413px;top:1207px;width:24px;height:24px;border:1px solid #dcdfe6;background:#fff"></div>
  <div class="a" style="left:466px;top:1212px;width:12px;height:12px;border-radius:50%;background:#62bf73"></div>
  <div class="a" style="left:515px;top:1208px;font-size:18px;line-height:20px;color:#333">_cf-custom-hostname</div>
  <div class="a" style="left:740px;top:1208px;font-size:18px;line-height:20px;color:#333">TXT</div>
  <div class="a" style="left:890px;top:1209px;font-size:18px;line-height:20px;color:#333">默认</div>
  <div class="a" style="left:1040px;top:1191px;font-size:18px;line-height:27px;color:#333">1383dc20-765b-47af-bca3-<br>454de169215c</div>
  <div class="a" style="left:1640px;top:1208px;font-size:18px;line-height:20px;color:#333">600</div>
  <div class="a" style="left:1790px;top:1208px;font-size:18px;line-height:20px;color:#000;font-weight:bold">-</div>
  <div class="a" style="left:1940px;top:1208px;font-size:18px;line-height:20px;color:#333">2024-05-21 17:29:05</div>
  <div class="a" style="left:413px;top:1291px;width:24px;height:24px;border:1px solid #dcdfe6;background:#fff"></div>
  <div class="a" style="left:466px;top:1296px;width:12px;height:12px;border-radius:50%;background:#62bf73"></div>
  <div class="a" style="left:515px;top:1292px;font-size:18px;line-height:20px;color:#333">resources.cos</div>
  <div class="a" style="left:740px;top:1292px;font-size:18px;line-height:20px;color:#333">CNAME</div>
  <div class="a" style="left:890px;top:1293px;font-size:18px;line-height:20px;color:#333">默认</div>
  <div class="a" style="left:1040px;top:1288px;font-size:18px;line-height:27px;color:#333">kincaidyang.github.com.</div>
  <div class="a" style="left:1340px;top:1292px;font-size:18px;line-height:20px;color:#000;font-weight:bold">-</div>
  <div class="a" style="left:1640px;top:1292px;font-size:18px;line-height:20px;color:#333">600</div>
  <div class="a" style="left:1790px;top:1292px;font-size:18px;line-height:20px;color:#000;font-weight:bold">-</div>
  <div class="a" style="left:1940px;top:1292px;font-size:18px;line-height:20px;color:#333">2024-05-21 17:29:05</div>
  <div class="a" style="left:2048px;top:387px;width:15px;height:961px;background:linear-gradient(to right,rgba(0,0,0,0),rgba(0,0,0,0.13))"></div>
  <div class="a" style="left:2063px;top:387px;width:375px;height:961px;background:#fff"></div>
  <div class="a" style="left:2063px;top:444px;width:375px;height:1px;background:#d5dae3"></div>
  <div class="a" style="left:2063px;top:515px;width:375px;height:1px;background:#e6e9ef"></div>
  <div class="a" style="left:2063px;top:585px;width:375px;height:1px;background:#e6e9ef"></div>
  <div class="a" style="left:2063px;top:682px;width:375px;height:1px;background:#e6e9ef"></div>
  <div class="a" style="left:2063px;top:806px;width:375px;height:1px;background:#e6e9ef"></div>
  <div class="a" style="left:2063px;top:930px;width:375px;height:1px;background:#e6e9ef"></div>
  <div class="a" style="left:2063px;top:1001px;width:375px;height:1px;background:#e6e9ef"></div>
  <div class="a" style="left:2063px;top:1072px;width:375px;height:1px;background:#e6e9ef"></div>
  <div class="a" style="left:2063px;top:1169px;width:375px;height:1px;background:#e6e9ef"></div>
  <div class="a" style="left:2063px;top:1266px;width:375px;height:1px;background:#e6e9ef"></div>
  <div class="a" style="left:2063px;top:1337px;width:375px;height:1px;background:#e6e9ef"></div>
  <div class="a" style="left:2078px;top:406px;font-size:18px;line-height:20px;color:#888;font-weight:bold">操作</div>
  <div class="a" style="left:2078px;top:471px;font-size:18px;line-height:20px;color:#006eff">修改</div>
  <div class="a" style="left:2162px;top:471px;font-size:18px;line-height:20px;color:#006eff">暂停</div>
  <div class="a" style="left:2246px;top:471px;font-size:18px;line-height:20px;color:#006eff">备注</div>
  <div class="a" style="left:2330px;top:471px;font-size:18px;line-height:20px;color:#006eff">删除</div>
  <div class="a" style="left:2078px;top:541px;font-size:18px;line-height:20px;color:#006eff">修改</div>
  <div class="a" style="left:2162px;top:541px;font-size:18px;line-height:20px;color:#006eff">暂停</div>
  <div class="a" style="left:2246px;top:541px;font-size:18px;line-height:20px;color:#006eff">备注</div>
  <div class="a" style="left:2330px;top:541px;font-size:18px;line-height:20px;color:#006eff">删除</div>
  <div class="a" style="left:2078px;top:625px;font-size:18px;line-height:20px;color:#006eff">修改</div>
  <div class="a" style="left:2162px;top:625px;font-size:18px;line-height:20px;color:#006eff">暂停</div>
  <div class="a" style="left:2246px;top:625px;font-size:18px;line-height:20px;color:#006eff">备注</div>
  <div class="a" style="left:2330px;top:625px;font-size:18px;line-height:20px;color:#006eff">删除</div>
  <div class="a" style="left:2078px;top:735px;font-size:18px;line-height:20px;color:#006eff">修改</div>
  <div class="a" style="left:2162px;top:735px;font-size:18px;line-height:20px;color:#006eff">暂停</div>
  <div class="a" style="left:2246px;top:735px;font-size:18px;line-height:20px;color:#006eff">备注</div>
  <div class="a" style="left:2330px;top:735px;font-size:18px;line-height:20px;color:#006eff">删除</div>
  <div class="a" style="left:2078px;top:859px;font-size:18px;line-height:20px;color:#006eff">修改</div>
  <div class="a" style="left:2162px;top:859px;font-size:18px;line-height:20px;color:#006eff">暂停</div>
  <div class="a" style="left:2246px;top:859px;font-size:18px;line-height:20px;color:#006eff">备注</div>
  <div class="a" style="left:2330px;top:859px;font-size:18px;line-height:20px;color:#006eff">删除</div>
  <div class="a" style="left:2078px;top:957px;font-size:18px;line-height:20px;color:#006eff">修改</div>
  <div class="a" style="left:2162px;top:957px;font-size:18px;line-height:20px;color:#006eff">暂停</div>
  <div class="a" style="left:2246px;top:957px;font-size:18px;line-height:20px;color:#006eff">备注</div>
  <div class="a" style="left:2330px;top:957px;font-size:18px;line-height:20px;color:#006eff">删除</div>
  <div class="a" style="left:2078px;top:1028px;font-size:18px;line-height:20px;color:#006eff">修改</div>
  <div class="a" style="left:2162px;top:1028px;font-size:18px;line-height:20px;color:#006eff">暂停</div>
  <div class="a" style="left:2246px;top:1028px;font-size:18px;line-height:20px;color:#006eff">备注</div>
  <div class="a" style="left:2330px;top:1028px;font-size:18px;line-height:20px;color:#006eff">删除</div>
  <div class="a" style="left:2078px;top:1112px;font-size:18px;line-height:20px;color:#006eff">修改</div>
  <div class="a" style="left:2162px;top:1112px;font-size:18px;line-height:20px;color:#006eff">暂停</div>
  <div class="a" style="left:2246px;top:1112px;font-size:18px;line-height:20px;color:#006eff">备注</div>
  <div class="a" style="left:2330px;top:1112px;font-size:18px;line-height:20px;color:#006eff">删除</div>
  <div class="a" style="left:2078px;top:1209px;font-size:18px;line-height:20px;color:#006eff">修改</div>
  <div class="a" style="left:2162px;top:1209px;font-size:18px;line-height:20px;color:#006eff">暂停</div>
  <div class="a" style="left:2246px;top:1209px;font-size:18px;line-height:20px;color:#006eff">备注</div>
  <div class="a" style="left:2330px;top:1209px;font-size:18px;line-height:20px;color:#006eff">删除</div>
  <div class="a" style="left:2078px;top:1293px;font-size:18px;line-height:20px;color:#006eff">修改</div>
  <div class="a" style="left:2162px;top:1293px;font-size:18px;line-height:20px;color:#006eff">暂停</div>
  <div class="a" style="left:2246px;top:1293px;font-size:18px;line-height:20px;color:#006eff">备注</div>
  <div class="a" style="left:2330px;top:1293px;font-size:18px;line-height:20px;color:#006eff">删除</div>
  <!--/TABLE-->
  <div class="a" style="left:2486px;top:925px;width:60px;height:60px;border-radius:50%;background:#006eff;box-shadow:0 4px 12px rgba(0,20,60,0.14)"></div>
  <svg class="a" style="left:2490px;top:930px" width="55" height="50" viewBox="2490 930 55 50"><path d="M2505.5 963 V952 A10.5 10.5 0 0 1 2526.5 952 V964.5 A4 4 0 0 1 2522.5 968.5 H2516" fill="none" stroke="#fff" stroke-width="3"/><rect x="2501" y="952" width="6" height="10.6" fill="#fff"/><rect x="2525" y="952" width="6" height="10.6" fill="#fff"/><path d="M2511.3 956.2 A4.7 4.7 0 0 0 2520.7 956.2" fill="none" stroke="#fff" stroke-width="2.6"/></svg>
  <div class="a" style="left:2486px;top:1000px;width:60px;height:60px;border-radius:50%;background:#fff;box-shadow:0 4px 12px rgba(0,20,60,0.14)"></div>
  <svg class="a" style="left:2490px;top:1005px" width="55" height="50" viewBox="2490 1005 55 50"><path d="M2518.5 1020.3 A8.2 8.2 0 0 0 2509.6 1027.6 A6.5 6.5 0 0 0 2508.2 1040.2 H2524.2 A5.9 5.9 0 0 0 2529.8 1032" fill="none" stroke="#1a1a1a" stroke-width="3"/><path d="M2519.3 1027.8 H2531 L2529.6 1025.6 V1022 A4.3 4.3 0 0 0 2521 1022 V1025.6 Z" fill="#1a1a1a"/><path d="M2522.6 1029.6 H2526.8 A2.1 1.6 0 0 1 2522.6 1029.6 Z" fill="#1a1a1a"/></svg>
  <div class="a" style="left:2486px;top:1075px;width:60px;height:60px;border-radius:50%;background:#fff;box-shadow:0 4px 12px rgba(0,20,60,0.14)"></div>
  <svg class="a" style="left:2490px;top:1080px" width="55" height="50" viewBox="2490 1080 55 50"><path d="M2502.4 1094.4 H2510.5 Q2516 1094.4 2516 1100 V1112.4 M2529.7 1094.4 H2521.5 Q2516 1094.4 2516 1100 M2502.4 1094.4 V1112.4 H2512.5 L2516 1115.2 L2519.5 1112.4 H2529.7 V1094.4" fill="none" stroke="#1a1a1a" stroke-width="2.7"/><path d="M2513 1113 L2516 1116.8 L2519 1113 Z" fill="#1a1a1a"/><rect x="2507" y="1102.3" width="4.9" height="2.6" fill="#1a1a1a"/><rect x="2520.4" y="1102.3" width="4.6" height="2.6" fill="#1a1a1a"/></svg>
  <div class="a" style="left:2492px;top:1150px;width:48px;height:48px;border-radius:50%;background:#fff;box-shadow:0 4px 12px rgba(0,20,60,0.14)"></div>
  <svg class="a" style="left:2495px;top:1155px" width="45" height="40" viewBox="2495 1155 45 40"><path d="M2507.3 1166.9 H2524.7 M2515.9 1173.9 H2524.7 M2507.3 1181.1 H2524.7" stroke="#111" stroke-width="2.1" stroke-linecap="round"/><path d="M2506.3 1170.9 L2511.9 1174.1 L2506.3 1177.3 Z" fill="#111"/></svg>
</div>
</body></html>
